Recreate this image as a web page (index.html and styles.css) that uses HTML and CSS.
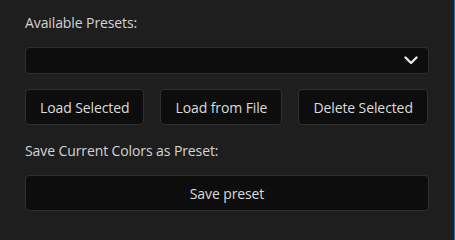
FILE: index.html
```html
<!DOCTYPE html>
<html>
<head>
<meta charset="utf-8">
<link rel="stylesheet" href="styles.css">
</head>
<body>
<div class="panel">
  <div class="label">Available Presets:</div>
  <div class="select">
    <svg class="chev" width="14" height="9" viewBox="0 0 14 9"><path d="M1.5 1.5 L7 7 L12.5 1.5" fill="none" stroke="#e6e6e6" stroke-width="2.4" stroke-linecap="round" stroke-linejoin="round"/></svg>
  </div>
  <div class="btn-row">
    <button class="btn">Load Selected</button>
    <button class="btn">Load from File</button>
    <button class="btn">Delete Selected</button>
  </div>
  <div class="label label2">Save Current Colors as Preset:</div>
  <button class="btn btn-wide">Save preset</button>
</div>
</body>
</html>
```
FILE: styles.css
```css
html, body {
  margin: 0;
  height: 100%;
}
body {
  background: #1e1e1e;
  font-family: "Open Sans", "Liberation Sans", sans-serif;
  font-size: 14px;
  color: #d8d8d8;
  box-sizing: border-box;
  border-right: 1px solid #2f6c9c;
}
.panel {
  padding: 13px 25px 0 25px;
  width: 404px;
}
.label {
  line-height: 20px;
  height: 20px;
  margin-bottom: 14px;
  color: #d4d4d4;
  letter-spacing: -0.1px;
}
.label2 {
  margin-top: 16px;
}
.select {
  height: 27px;
  box-sizing: border-box;
  background: #0d0d0d;
  border: 1px solid #2e2e2e;
  border-radius: 4px;
  display: flex;
  align-items: center;
  justify-content: flex-end;
  padding-right: 10px;
}
.btn-row {
  display: flex;
  gap: 16px;
  margin-top: 15px;
}
.btn {
  height: 36px;
  box-sizing: border-box;
  background: #0d0d0d;
  border: 1px solid #303030;
  border-radius: 4px;
  color: #dcdcdc;
  font-family: "Open Sans", "Liberation Sans", sans-serif;
  font-size: 14px;
  letter-spacing: -0.1px;
  padding: 0 14px;
  margin: 0;
}
.btn-wide {
  display: block;
  width: 100%;
}
```
